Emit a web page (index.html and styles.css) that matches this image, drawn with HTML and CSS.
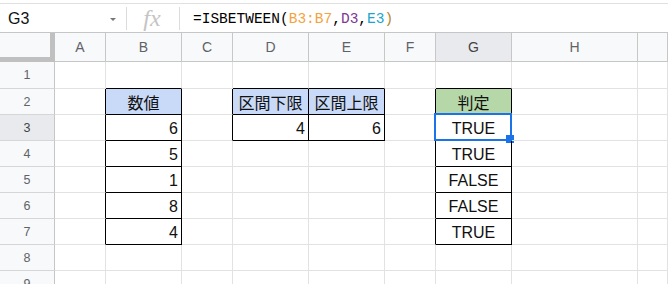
FILE: index.html
```html
<!DOCTYPE html>
<html lang="ja">
<head>
<meta charset="utf-8">
<link rel="stylesheet" href="styles.css">
</head>
<body>
<div class="fbar">
  <div class="namebox"><span class="ref">G3</span><span class="caret"></span></div>
  <div class="sep"></div>
  <div class="fx">fx</div>
  <div class="sep"></div>
  <div class="formula">=ISBETWEEN(<span class="o">B3:B7</span>,<span class="p">D3</span>,<span class="t">E3</span><span class="cp">)</span></div>
</div>
<div class="grid">
  <div class="c corner"></div><div class="c h">A</div><div class="c h">B</div><div class="c h">C</div><div class="c h">D</div><div class="c h">E</div><div class="c h">F</div><div class="c h hs">G</div><div class="c h">H</div><div class="c h"></div>

  <div class="c r">1</div><div class="c"></div><div class="c kb"></div><div class="c"></div><div class="c kb"></div><div class="c kb"></div><div class="c"></div><div class="c kb"></div><div class="c"></div><div class="c"></div>

  <div class="c r">2</div><div class="c kr"></div><div class="c kr kb blue ctr">数値</div><div class="c kr"></div><div class="c kr kb blue ctr">区間下限</div><div class="c kr kb blue ctr">区間上限</div><div class="c kr"></div><div class="c kr kb green ctr">判定</div><div class="c"></div><div class="c"></div>

  <div class="c r rs">3</div><div class="c kr"></div><div class="c kr kb num">6</div><div class="c kr"></div><div class="c kr kb num">4</div><div class="c kr kb num">6</div><div class="c kr"></div><div class="c kr kb ctr sel">TRUE<span class="selbox"></span><span class="handle"></span></div><div class="c"></div><div class="c"></div>

  <div class="c r">4</div><div class="c kr"></div><div class="c kr kb num">5</div><div class="c"></div><div class="c"></div><div class="c"></div><div class="c kr"></div><div class="c kr kb ctr">TRUE</div><div class="c"></div><div class="c"></div>

  <div class="c r">5</div><div class="c kr"></div><div class="c kr kb num">1</div><div class="c"></div><div class="c"></div><div class="c"></div><div class="c kr"></div><div class="c kr kb ctr">FALSE</div><div class="c"></div><div class="c"></div>

  <div class="c r">6</div><div class="c kr"></div><div class="c kr kb num">8</div><div class="c"></div><div class="c"></div><div class="c"></div><div class="c kr"></div><div class="c kr kb ctr">FALSE</div><div class="c"></div><div class="c"></div>

  <div class="c r">7</div><div class="c kr"></div><div class="c kr kb num">4</div><div class="c"></div><div class="c"></div><div class="c"></div><div class="c kr"></div><div class="c kr kb ctr">TRUE</div><div class="c"></div><div class="c"></div>

  <div class="c r">8</div><div class="c"></div><div class="c"></div><div class="c"></div><div class="c"></div><div class="c"></div><div class="c"></div><div class="c"></div><div class="c"></div><div class="c"></div>

  <div class="c r">9</div><div class="c"></div><div class="c"></div><div class="c"></div><div class="c"></div><div class="c"></div><div class="c"></div><div class="c"></div><div class="c"></div><div class="c"></div>
</div>
</body>
</html>
```

FILE: styles.css
```css
html, body {
  margin: 0;
  padding: 0;
  background: #fff;
  overflow: hidden;
}
body {
  width: 668px;
  height: 284px;
  font-family: "Liberation Sans", Arial, "Noto Sans CJK JP", sans-serif;
}
.fbar {
  margin-top: 3px;
  border-top: 1px solid #e0e0e0;
  height: 29px;
  display: flex;
  align-items: center;
  box-sizing: border-box;
}
.namebox {
  width: 126px;
  display: flex;
  align-items: center;
  justify-content: space-between;
  padding: 0 10px 0 8px;
  box-sizing: border-box;
  height: 100%;
}
.ref {
  font-family: "Liberation Sans", Arial, sans-serif;
  font-size: 16px;
  color: #111;
  padding-top: 1px;
}
.caret {
  width: 0;
  height: 0;
  border-left: 3px solid transparent;
  border-right: 3px solid transparent;
  border-top: 3px solid #777;
  margin-top: 2px;
}
.sep {
  width: 1px;
  height: 23px;
  background: #dcdcdc;
}
.fx {
  width: 52px;
  text-align: center;
  font-family: "Liberation Serif", serif;
  font-style: italic;
  font-size: 24px;
  color: #c4c4c4;
  line-height: 26px;
  box-sizing: border-box;
  padding-right: 2px;
}
.formula {
  padding-left: 13px;
  font-family: "Liberation Mono", "DejaVu Sans Mono", monospace;
  font-size: 14.5px;
  color: #000;
  padding-top: 1px;
}
.o { color: #f4a340; }
.p { color: #7e3794; }
.t { color: #1ba5cf; }
.cp { color: #b9862e; }

.grid {
  display: grid;
  grid-template-columns: 55px 51px 76px 51px 76px 76px 51px 76px 126px 1fr;
  grid-template-rows: 29px 27px repeat(8, 26px);
  border-top: 1px solid #c4c7c5;
}
.c {
  box-sizing: border-box;
  border-right: 1px solid #e2e2e2;
  border-bottom: 1px solid #e2e2e2;
  position: relative;
  font-size: 16px;
  color: #111;
  display: flex;
  align-items: center;
  padding-top: 2px;
}
.h {
  background: #f8f9fa;
  border-right-color: #c7c7c7;
  border-bottom-color: #c4c7c5;
  justify-content: center;
  font-size: 14px;
  color: #5f6368;
  padding-top: 0;
}
.hs { background: #e8eaed; color: #444; }
.corner {
  background: #f8f9fa;
  border-right: 5px solid #c0c0c0;
  border-bottom: 5px solid #c0c0c0;
}
.r {
  background: #f8f9fa;
  border-right-color: #c4c7c5;
  border-bottom-color: #d6d6d6;
  justify-content: center;
  font-size: 12.5px;
  color: #5f6368;
  padding-top: 0;
}
.rs { background: #e8eaed; color: #444; }
.kr { border-right-color: #000; }
.kb { border-bottom-color: #000; }
.blue { background: #c9daf8; }
.green { background: #b6d7a8; }
.ctr { justify-content: center; }
.num { justify-content: flex-end; padding-right: 3px; }
.blue, .green {
  font-family: "Noto Sans CJK JP", "Liberation Sans", sans-serif;
  font-size: 16px;
  letter-spacing: 0;
  padding-top: 0;
}
.selbox {
  position: absolute;
  left: -2px;
  top: -2px;
  right: -1px;
  bottom: -1px;
  border: 2px solid #1a73e8;
}
.handle {
  position: absolute;
  left: 70px;
  top: 20px;
  width: 8px;
  height: 8px;
  background: #1a73e8;
}
```
